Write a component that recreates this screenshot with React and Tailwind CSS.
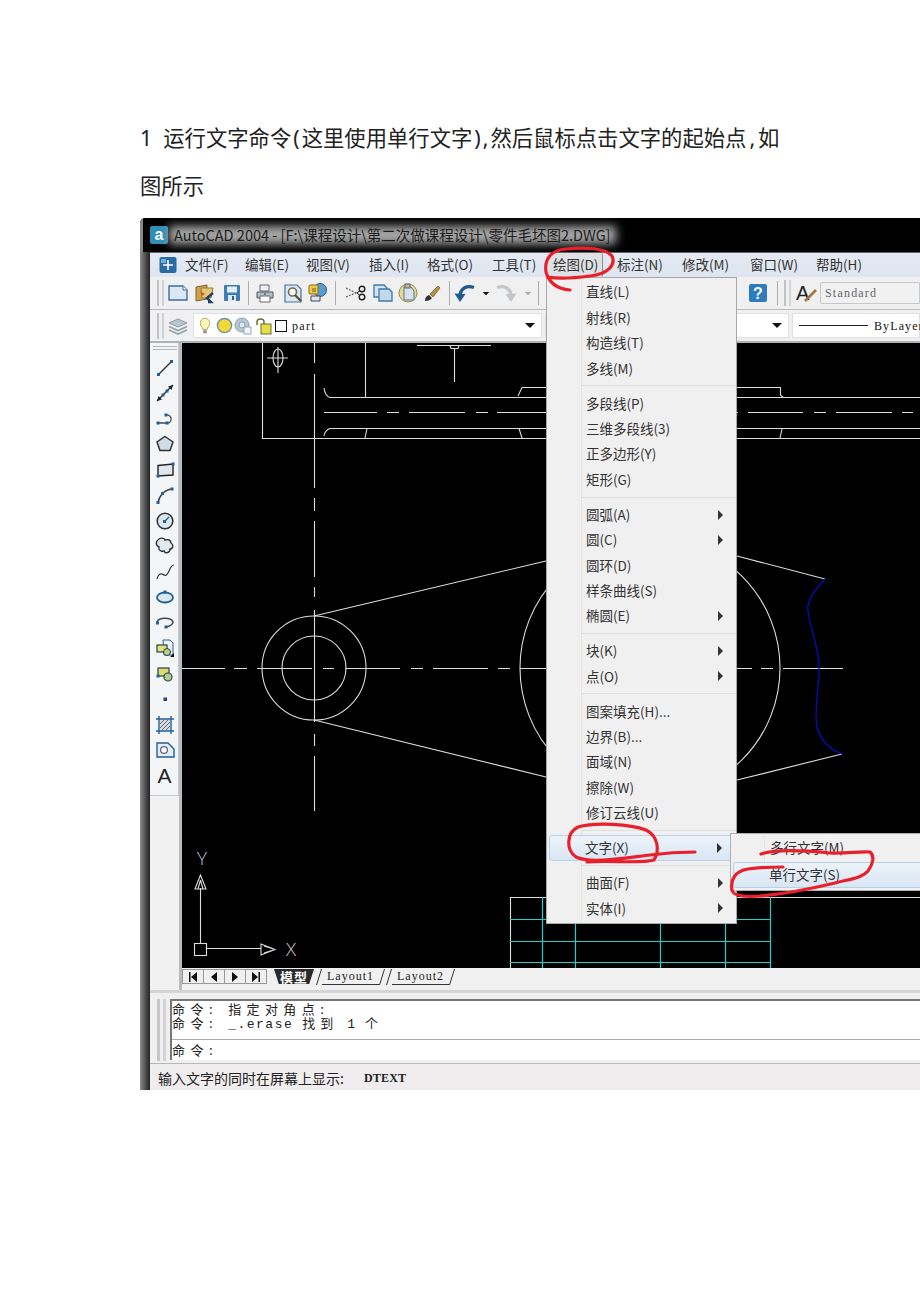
import React from 'react';

const BLUE = '#1f6098';

const Ico = ({ className = '', children }) => (
  <svg viewBox="0 0 22 22" fill="none" className={`h-[22px] w-[22px] shrink-0 ${className}`}>
    {children}
  </svg>
);

const Node = ({ x, y }) => <rect x={x - 1.5} y={y - 1.5} width="3" height="3" fill={BLUE} />;

const Grip = () => (
  <div className="ml-[7px] flex h-[26px] shrink-0 gap-[3px]">
    <div className="w-[2px] bg-[#bcc2c8]" />
    <div className="w-[2px] bg-[#cfd3d8]" />
  </div>
);

const Sep = ({ className = '' }) => <div className={`h-[24px] w-px shrink-0 bg-[#a9aeb3] ${className}`} />;

const Caret = ({ className = '' }) => (
  <div className={`h-0 w-0 shrink-0 border-x-[5px] border-t-[5px] border-x-transparent border-t-[#111] ${className}`} />
);

// left draw toolbar
const DrawTools = [
  <><path d="M5 17L17 5" stroke="#333" strokeWidth="1.4" /><Node x={4.5} y={17.5} /><Node x={17.5} y={4.5} /></>,
  <><path d="M3 19L19 3" stroke="#333" strokeWidth="1.4" /><path d="M19 3l-1.5 5-3.5-3.5zM3 19l1.5-5 3.5 3.5z" fill="#222" /><Node x={9} y={13} /><Node x={13} y={9} /></>,
  <><path d="M4 15H14A4 4 0 1 0 12 7" stroke="#445" strokeWidth="1.3" /><Node x={4} y={15} /><Node x={13} y={15} /><Node x={12} y={7} /></>,
  <path d="M11 3.5L19 9l-3 8.5H6L3 9z" fill="#cfdde6" stroke="#333" strokeWidth="1.5" />,
  <><path d="M4 6.5L19 5v11L4 17z" fill="#dfe6ec" stroke="#222" strokeWidth="1.4" /><Node x={4} y={17} /><Node x={19} y={5} /></>,
  <><path d="M4 19C5 12 10 6 18 5" stroke="#444" strokeWidth="1.5" /><Node x={4} y={18.5} /><Node x={8.5} y={9.5} /><Node x={18} y={5} /></>,
  <><circle cx="11" cy="11" r="7.8" fill="#dfe7ee" stroke="#333" strokeWidth="1.6" /><path d="M11 11l4-4" stroke={BLUE} strokeWidth="1.3" /><Node x={10.5} y={11.5} /></>,
  <path d="M5 4c3-2 6 0 6 1 3-1 6 0 6 3 3 2 2 6-1 6 0 4-5 5-6 2-3 1-6-1-5-4-4-2-3-6 0-8z" fill="#e2e9ef" stroke="#333" strokeWidth="1.4" />,
  <path d="M3 18C4 13 7 12 9 13.5S13 15 15 10s3-6 5-6" stroke="#333" strokeWidth="1.2" />,
  <><ellipse cx="11" cy="11.5" rx="8" ry="5" fill="#dce8f0" stroke={BLUE} strokeWidth="1.8" /><Node x={11} y={6} /></>,
  <><path d="M3 10C5 5 17 5 19 10c0 3-3 4-7 5" stroke="#445" strokeWidth="1.5" /><Node x={3.5} y={11} /><Node x={12} y={15} /></>,
  <><path d="M9 3h7l3 3v12h-9z" fill="#edf2f6" stroke={BLUE} /><rect x="3" y="8" width="10" height="7" fill="#e6e07a" stroke="#245" strokeWidth="1.2" /><circle cx="13" cy="15" r="3.5" fill="#b9cf7a" stroke="#245" /><path d="M20 20v-4l-4 4z" fill="#111" /></>,
  <><rect x="4" y="5" width="11" height="8" fill="#dcdc6e" stroke="#245" strokeWidth="1.2" /><circle cx="14" cy="14" r="4" fill="#b5cc85" stroke="#245" strokeWidth="1.2" /><Node x={4} y={13} /></>,
  <rect x="9.5" y="9.5" width="3.5" height="3.5" fill="#1e4b73" />,
  <><path d="M6 6h10v10H6z" fill="#d5dde4" /><path d="M6 10l4-4M6 14l8-8M8 16l8-8M12 16l4-4" stroke="#667" strokeWidth="1" /><path d="M2 5H20M2 17H20M5 2V20M17 2V20" stroke={BLUE} strokeWidth="1.4" /></>,
  <><path d="M3 4H14L20 10V18H3z" fill="#e3ecf3" stroke={BLUE} strokeWidth="1.4" /><circle cx="10" cy="11" r="3.4" fill="#fff" stroke="#667" strokeWidth="1.3" /></>,
];

const drawMenu = [
  [['直线(L)'], ['射线(R)'], ['构造线(T)'], ['多线(M)']],
  [['多段线(P)'], ['三维多段线(3)'], ['正多边形(Y)'], ['矩形(G)']],
  [['圆弧(A)', 1], ['圆(C)', 1], ['圆环(D)'], ['样条曲线(S)'], ['椭圆(E)', 1]],
  [['块(K)', 1], ['点(O)', 1]],
  [['图案填充(H)...'], ['边界(B)...'], ['面域(N)'], ['擦除(W)'], ['修订云线(U)']],
  [['文字(X)', 1, 1]],
  [['曲面(F)', 1], ['实体(I)', 1]],
];

const menus = [
  ['文件(F)', 'w-[60px]'],
  ['编辑(E)', 'w-[61px]'],
  ['视图(V)', 'w-[63px]'],
  ['插入(I)', 'w-[58px]'],
  ['格式(O)', 'w-[65px]'],
  ['工具(T)', 'w-[61px]'],
  ['绘图(D)', 'w-[64px]'],
  ['标注(N)', 'w-[65px]'],
  ['修改(M)', 'w-[68px]'],
  ['窗口(W)', 'w-[66px]'],
  ['帮助(H)', 'w-[60px]'],
];

const MenuRow = ({ label, arrow, active }) => (
  <div
    className={
      active
        ? 'mx-[2px] flex h-[25.4px] items-center rounded-[3px] border border-[#b9cfe6] bg-gradient-to-b from-[#edf3fa] to-[#d9e6f4]'
        : 'flex h-[25.4px] items-center'
    }
  >
    <div className={active ? 'w-[31px] shrink-0' : 'w-[34px] shrink-0'} />
    <div className={`flex flex-1 items-center justify-between self-stretch pl-[4px] ${active ? '' : 'border-l border-[#e4e4e4]'} ${active ? 'pr-[11px]' : 'pr-[13px]'}`}>
      <span className="leading-none">{label}</span>
      {arrow && <div className="h-0 w-0 border-y-[5px] border-l-[5px] border-y-transparent border-l-[#333]" />}
    </div>
  </div>
);

const Slant = ({ d }) => (
  <svg viewBox="0 0 6 16" className="h-[16px] w-[6px] shrink-0" fill="none">
    <path d={d} stroke="#333" />
  </svg>
);

const LayoutTab = ({ name }) => (
  <div className="flex items-start">
    <Slant d="M5.5 0L0.5 16" />
    <div className="h-[16px] border-b border-[#333] px-[5px] font-['Liberation_Serif',serif] text-[12px] leading-[14px] tracking-[1px] text-[#222]">
      {name}
    </div>
    <Slant d="M5.5 0L0.5 16" />
  </div>
);

const NavBtn = ({ children }) => (
  <div className="flex h-full w-[21px] items-center justify-center border-r border-[#999]">
    <svg viewBox="0 0 10 10" className="h-[10px] w-[10px]" fill="#111">{children}</svg>
  </div>
);

const CadCanvas = () => (
  <svg viewBox="182 343 738 625" className="h-[625px] w-[738px] shrink-0 bg-black" fill="none">
    <g stroke="#dcdcdc" strokeWidth="1.1">
      <path d="M314.5 343V363M314.5 374V488M314.5 498V511M314.5 521V577M314.5 587V597M314.5 610V722M314.5 734V746M314.5 756V811" />
      <path d="M182 668.5H225M234 668.5H247M257 668.5H312M323 668.5H334M345 668.5H400M411 668.5H423M433 668.5H488M498 668.5H510M520 668.5H546M737 668.5H752M761 668.5H773M783 668.5H843" />
      <circle cx="314" cy="668" r="52" />
      <circle cx="314" cy="668" r="32" />
      <circle cx="650" cy="668" r="130" />
      <path d="M314 616L546 561M314 720L546 777M737 556L825 579M737 780L842 754" />
      <path d="M262.5 343V438.5H920M365.5 343V397.5M330 397.5H920M324 388Q325 396 330 397.5M518 396L522 387.5H780.5V395L783 397" />
      <path d="M324 412.5H377M387 412.5H399M409 412.5H465M476 412.5H488M497 412.5H547M737 412.5H738M748 412.5H803M814 412.5H826M836 412.5H892M902 412.5H913" />
      <path d="M324 436Q325 430 330 428.5H920M367 428.5L365 438M519 428.5L522 438M782 429L780 438" />
      <path d="M417 345.5H491M450 345.5L451 348.5H458L459 345.5M454.5 348V382" />
      <ellipse cx="278" cy="358" rx="5" ry="9" />
      <path d="M267 358H288M278 347V373" />
      <path d="M200.5 943V888M206 948.5H261" />
      <rect x="194.5" y="943.5" width="12" height="12" />
      <path d="M200.5 875L195 889H206zM200.5 880L198 889M200.5 880L203 889" />
      <path d="M261 944L275 949.5L261 955zM264 946L275 949.5M264 953L275 949.5" />
      <path d="M510.5 968V897.5H920" />
    </g>
    <path d="M825 579C815 590 806 600 808 612C811 632 820 650 819 673C818 695 814 712 817 727C821 743 832 750 842 754" stroke="#0a0ab8" strokeWidth="1.3" />
    <path d="M510 919.500H770M510 941.500H770M510 962.500H770M542.500 897V968M575.500 897V968M660.500 897V968M725.500 897V968M770.500 897V968" stroke="#1fd0d0" strokeWidth="1.2" />
    <text x="286" y="956" fill="#ececec" className="font-['Noto_Sans',sans-serif] text-[19px] font-extralight">X</text>
    <text x="197" y="865" fill="#ececec" className="font-['Noto_Sans',sans-serif] text-[19px] font-extralight">Y</text>
  </svg>
);

const App = () => {
  return (
    <div className="relative h-[1302px] w-[920px] overflow-hidden bg-white font-['Noto_Sans','Noto_Sans_CJK_SC',sans-serif] text-[#333]">
      <div className="pl-[140px] pt-[114px] text-[21.33px] leading-[48px] text-[#222]">
        <p className="whitespace-pre">
          1  运行文字命令<span className="mx-[2px]">(</span>这里使用单行文字<span className="mx-[2px]">)</span><span className="mr-[2px]">,</span>然后鼠标点击文字的起始点<span className="mx-[3px]">,</span>如
        </p>
        <p>图所示</p>
      </div>

      <div className="relative ml-[140px] mt-[8px] flex h-[872px] w-[780px] flex-col overflow-hidden rounded-tl-[5px] font-['Noto_Sans_CJK_SC',sans-serif] text-[13.5px]">
        {/* title bar */}
        <div className="flex h-[34px] shrink-0 items-center border-l-[3px] border-[#8a8a8a] bg-black pl-[7px]">
          <div className="flex h-[18px] w-[18px] items-center justify-center rounded-[2px] bg-[#2f8fb8] font-['Liberation_Sans',sans-serif] text-[16px] font-bold leading-none text-white">
            a
          </div>
          <div className="relative ml-[6px]">
            <div className="absolute -inset-x-[5px] inset-y-[2px] bg-[#a8a8a8] blur-[5px]" />
            <span className="relative whitespace-nowrap text-[14.5px] text-[#1c1c1c]">
              AutoCAD 2004 - [F:\课程设计\第二次做课程设计\零件毛坯图2.DWG]
            </span>
          </div>
        </div>

        <div className="flex min-h-0 flex-1">
          <div className="w-[10px] shrink-0 bg-gradient-to-r from-[#8d8d8d] to-[#222]" />

          <div className="flex min-w-0 flex-1 flex-col bg-[#f0f0f0]">
            {/* menu bar */}
            <div className="flex h-[25px] shrink-0 items-center border-t border-[#666] bg-gradient-to-b from-[#e4e9f2] to-[#dfe6f1] pl-[9px]">
              <svg viewBox="0 0 18 18" className="h-[18px] w-[18px] shrink-0">
                <rect x="0.5" y="1" width="17" height="16" rx="2" fill="#2a6aa5" />
                <path d="M9 4V14M4 9H14" stroke="#fff" strokeWidth="1.6" />
                <rect x="2" y="3" width="5" height="4" fill="#6cb0de" />
              </svg>
              <div className="ml-[8px] flex items-center">
                {menus.map(([label, w]) => (
                  <div key={label} className={`${w} shrink-0 leading-none`}>
                    {label === '绘图(D)' ? (
                      <span className="-ml-[4px] inline-block rounded-[2px] border-r border-[#8f8f8f] bg-[#dfe1e4] px-[4px] py-[5px]">{label}</span>
                    ) : (
                      label
                    )}
                  </div>
                ))}
              </div>
            </div>

            {/* standard toolbar */}
            <div className="flex h-[33px] shrink-0 items-center border-b border-[#b5bbc2]">
              <Grip />
              <Ico className="ml-[3px]">
                <path d="M2 4H16L20 8V18H2z" fill="#dbe8f2" stroke="#3b6f9f" strokeWidth="1.4" />
                <path d="M16 4V8H20" fill="#fff" stroke="#3b6f9f" />
              </Ico>
              <Ico className="ml-[5px]">
                <path d="M2 5L13 3V17L2 19z" fill="#c9a24a" stroke="#85652a" />
                <path d="M7 6H19L17 16H8z" fill="#e5c77a" stroke="#9c7d3c" />
                <path d="M19 11L13 16L17 20L14 20" stroke="#1c3f66" strokeWidth="2.4" />
                <path d="M6 9l5 3-3 2z" fill="#d9513a" />
              </Ico>
              <Ico className="ml-[5px]">
                <rect x="3" y="3" width="16" height="16" rx="1" fill="#3d7cb4" />
                <rect x="6" y="4.500" width="10" height="6" fill="#e3edf5" />
                <rect x="7" y="13" width="8" height="6" fill="#dbe6ef" />
                <rect x="11" y="14" width="2" height="4" fill="#2b5f8f" />
              </Ico>
              <Sep className="ml-[5px]" />
              <Ico className="ml-[5px]">
                <path d="M6 3H15V9H6z" fill="#eef1f4" stroke="#667" />
                <path d="M3 10H19V16H3z" fill="#b4bcc6" stroke="#556" />
                <path d="M6 14H16V20H6z" fill="#fff" stroke="#667" />
                <circle cx="11" cy="12" r="1" fill="#667" />
              </Ico>
              <Ico className="ml-[6px]">
                <path d="M3 3H15L19 7V20H3z" fill="#dbe8f2" stroke="#3e74a3" strokeWidth="1.2" />
                <circle cx="10.500" cy="10" r="4" fill="#f4f7fa" stroke="#7a6a4c" strokeWidth="1.6" />
                <path d="M13 13L19 19" stroke="#5a4a30" strokeWidth="2.2" />
              </Ico>
              <Ico className="ml-[2px]">
                <circle cx="14" cy="8" r="6.500" fill="#5c9bd1" stroke="#2c5b85" />
                <rect x="3" y="3" width="9" height="9" rx="1" fill="#eeca45" stroke="#8a6f1d" />
                <path d="M5 14H14V19H5z" fill="#dfe5ea" stroke="#445" />
                <path d="M6 7H10M6 9H10" stroke="#7a611b" />
              </Ico>
              <Sep className="ml-[7px]" />
              <Ico className="ml-[10px]">
                <path d="M0 6L11 11.500M0 15L11 10.500" stroke="#666" strokeDasharray="2 1.200" strokeWidth="1.200" />
                <circle cx="16" cy="7" r="2.800" stroke="#222" strokeWidth="1.400" />
                <circle cx="16" cy="15" r="2.800" stroke="#222" strokeWidth="1.400" />
                <path d="M11 11L14 8.500M11 11L14 13.500" stroke="#222" />
              </Ico>
              <Ico className="ml-[4px]">
                <path d="M2 3H12L15 6V15H2z" fill="#d6e4f0" stroke="#3c79ad" strokeWidth="1.300" />
                <path d="M7 7H17L20 10V19H7z" fill="#c3d9ea" stroke="#3c79ad" strokeWidth="1.300" />
              </Ico>
              <Ico className="ml-[3px]">
                <circle cx="11" cy="11" r="9" fill="#e6d79a" stroke="#a38c3f" />
                <path d="M7 5H14L17 9V18H7z" fill="#d6e3ec" stroke="#4b7797" />
                <rect x="8" y="2" width="5" height="4" fill="#b1b7a0" stroke="#666" />
              </Ico>
              <Ico className="ml-[2px]">
                <path d="M4 19C4 16 5 14 8 13L11 16C10 18 7 19 4 19z" fill="#333" />
                <path d="M9 12L17 4L19 6L12 15z" fill="#b78d4b" stroke="#6b5229" strokeWidth="0.700" />
              </Ico>
              <Sep className="ml-[6px]" />
              <Ico className="ml-[4px]">
                <path d="M20 5.500C13 3 7 6 6 13" stroke="#1f5a94" strokeWidth="3.400" />
                <path d="M0.500 11.500L11.500 12L6 20z" fill="#1f5a94" />
              </Ico>
              <Caret className="ml-[5px] scale-[0.65] border-t-[#1b2d88]" />
              <Ico className="ml-[4px]">
                <path d="M2 5.500C9 3 15 6 16 13" stroke="#c3c6c9" strokeWidth="3.400" />
                <path d="M21.500 11.500L10.500 12L16 20z" fill="#c3c6c9" />
              </Ico>
              <Caret className="ml-[6px] scale-[0.65] border-t-[#aaa]" />
              <Sep className="ml-[5px]" />
              <Ico className="ml-[208px]">
                <rect x="2" y="2" width="18" height="18" rx="2" fill="#2d7cbd" />
                <text x="11" y="17" textAnchor="middle" fill="#fff" className="font-['Liberation_Sans',sans-serif] text-[16px] font-bold">?</text>
              </Ico>
              <Sep className="ml-[8px]" />
              <div className="ml-[6px] flex h-[26px] shrink-0 gap-[3px]">
                <div className="w-[2px] bg-[#bcc2c8]" />
                <div className="w-[2px] bg-[#cfd3d8]" />
              </div>
              <Ico className="ml-[4px]">
                <text x="1" y="18" fill="#222" className="font-['Liberation_Sans',sans-serif] text-[20px]">A</text>
                <path d="M10 19L21 8" stroke="#a5753a" strokeWidth="2.600" />
              </Ico>
              <div className="ml-[3px] flex h-[22px] min-w-0 flex-1 items-center rounded-l-[2px] border border-[#c5c9cd] bg-[#f1f1f1] pl-[4px] font-['Liberation_Serif',serif] text-[12px] tracking-[1.2px] text-[#666]">
                Standard
              </div>
            </div>

            {/* layers toolbar */}
            <div className="flex h-[33px] shrink-0 items-center border-b-2 border-[#aeb3b8]">
              <Grip />
              <Ico className="ml-[3px]">
                <path d="M2 8L11 4L20 8L11 12z" fill="#b7c6d0" stroke="#8a9aa6" />
                <path d="M2 11.500L11 15.500L20 11.500M2 15L11 19L20 15" stroke="#93a3ae" strokeWidth="1.600" />
              </Ico>
              <div className="ml-[4px] flex h-[25px] w-[349px] shrink-0 items-center border border-[#e0e0e0] bg-white pl-[5px]">
                <svg viewBox="0 0 14 20" className="h-[20px] w-[12px] shrink-0">
                  <path d="M7 1C3 1 1.500 4 1.500 7C1.500 10 4 11 4.500 14H9.500C10 11 12.500 10 12.500 7C12.500 4 11 1 7 1z" fill="#fbf6b8" stroke="#a39b4f" />
                  <rect x="5" y="15" width="4" height="3.500" fill="#8c8c8c" />
                </svg>
                <svg viewBox="0 0 18 18" className="ml-[5px] h-[17px] w-[17px] shrink-0">
                  <circle cx="9" cy="9" r="7.500" fill="#f3d83a" stroke="#6a93a8" strokeWidth="1.500" />
                </svg>
                <svg viewBox="0 0 18 18" className="ml-[1px] h-[18px] w-[18px] shrink-0">
                  <circle cx="8" cy="8" r="7" fill="#b6c6d2" stroke="#8ea2b1" />
                  <circle cx="8" cy="8" r="3" fill="#e4ebf0" stroke="#8ea2b1" />
                  <rect x="10" y="10" width="7" height="7" fill="#f2f5f7" stroke="#97a6b3" />
                </svg>
                <svg viewBox="0 0 18 18" className="ml-[3px] h-[18px] w-[18px] shrink-0">
                  <path d="M2 8V5C2 1 9 1 9 5V7" fill="none" stroke="#6d6d28" strokeWidth="1.500" />
                  <rect x="6" y="7" width="10" height="10" fill="#e6de46" stroke="#6d6d28" />
                </svg>
                <div className="ml-[2px] h-[12px] w-[12px] shrink-0 border border-[#111] bg-white" />
                <span className="ml-[5px] font-['Liberation_Serif',serif] text-[12px] tracking-[1.3px] text-[#111]">part</span>
                <Caret className="ml-auto mr-[6px]" />
              </div>
              <div className="ml-[3px] flex h-[25px] w-[244px] shrink-0 items-center border border-[#e0e0e0] bg-white">
                <Caret className="ml-auto mr-[6px]" />
              </div>
              <div className="ml-[3px] flex h-[25px] min-w-0 flex-1 items-center border border-[#e0e0e0] bg-white pl-[6px] font-['Liberation_Serif',serif] text-[12px] tracking-[1.1px] text-[#111]">
                <div className="h-px w-[69px] shrink-0 bg-[#222]" />
                <span className="ml-[6px]">ByLayer</span>
              </div>
            </div>

            {/* workspace */}
            <div className="flex shrink-0">
              <div className="w-[32px] shrink-0 border-r-[3px] border-[#b9bcbf] bg-[#f1f1f1]">
                <div className="flex flex-col items-center border-b border-r border-[#c9c9c9] bg-[#f4f5f6] pb-[6px] pl-[1px]">
                  <div className="mb-[5px] mt-[3px] h-[4px] w-[24px] border-y border-[#b5b5b5]" />
                  {DrawTools.map((tool, i) => (
                    <div key={i} className="flex h-[25.5px] items-center">
                      <Ico>{tool}</Ico>
                    </div>
                  ))}
                  <div className="flex h-[25.5px] items-center font-['Liberation_Sans',sans-serif] text-[21px] leading-none text-[#222]">A</div>
                </div>
              </div>

              <div className="flex w-[738px] shrink-0 flex-col">
                <CadCanvas />
                {/* layout tabs */}
                <div className="flex h-[22px] items-start bg-[#f0f0f0] pt-px">
                  <div className="flex h-[15px] items-center border border-[#999]">
                    <NavBtn><path d="M1 0h1.500v10H1zM9 0v10L3 5z" /></NavBtn>
                    <NavBtn><path d="M8 0v10L2 5z" /></NavBtn>
                    <NavBtn><path d="M2 0v10l6-5z" /></NavBtn>
                    <div className="flex h-full w-[20px] items-center justify-center">
                      <svg viewBox="0 0 10 10" className="h-[10px] w-[10px]" fill="#111"><path d="M7.500 0H9v10H7.500zM1 0v10l6-5z" /></svg>
                    </div>
                  </div>
                  <div className="ml-[7px] flex h-[15px] w-[40px] items-center justify-center bg-[#2a2a2a] text-[13px] font-bold leading-none tracking-[1px] text-white [clip-path:polygon(0_0,100%_0,88%_100%,12%_100%)]">
                    模型
                  </div>
                  <div className="ml-[2px]"><LayoutTab name="Layout1" /></div>
                  <div className="ml-[1px]"><LayoutTab name="Layout2" /></div>
                </div>
              </div>
            </div>

            {/* command window */}
            <div className="flex h-[73px] shrink-0 items-stretch border-t-[3px] border-[#d4d4d4] pb-[3px] pl-[7px] pt-[6px]">
              <div className="flex h-[62px] shrink-0 gap-[3px]">
                <div className="w-[3px] bg-[#c4c7ca]" />
                <div className="w-[3px] bg-[#d2d5d8]" />
              </div>
              <div className="ml-[4px] flex min-w-0 flex-1 flex-col border-l-2 border-t-2 border-[#777] bg-white text-[13px] leading-[14px] text-[#222]">
                <div className="h-[39px] whitespace-pre border-b border-[#aaa] pt-px">
                  <div>
                    <span className="tracking-[5.5px]">命令</span>
                    <span className="tracking-[5.5px]">:</span>
                    <span className="ml-[10px] tracking-[5.4px]">指定对角点</span>
                    <span>:</span>
                  </div>
                  <div>
                    <span className="tracking-[5.5px]">命令</span>
                    <span className="tracking-[5.5px]">:</span>
                    <span className="ml-[10px] font-['Liberation_Mono',monospace] tracking-[1.5px]">_.erase</span>
                    <span className="ml-[9px] tracking-[5px]">找到</span>
                    <span className="ml-[9px] font-['Liberation_Mono',monospace]">1</span>
                    <span className="ml-[10px]">个</span>
                  </div>
                </div>
                <div className="whitespace-pre pt-[3px]">
                  <span className="tracking-[5.5px]">命令</span>:
                </div>
              </div>
            </div>

            {/* status bar */}
            <div className="flex h-[27px] shrink-0 items-center border-t border-[#b8b8b8] bg-[#efeded] pl-[8px] pt-[2px] text-[14px] text-[#222]">
              <span>输入文字的同时在屏幕上显示:</span>
              <span className="ml-[20px] font-['Liberation_Serif',serif] text-[12px] font-bold tracking-[0.2px]">DTEXT</span>
            </div>
          </div>
        </div>

        {/* draw menu */}
        <div className="absolute left-[406px] top-[59px] w-[191px] border border-[#a9a9a9] bg-[#f0f0f0] pb-[2px] pt-[1.5px] text-[#333]">
          {drawMenu.map((group, g) => (
            <div key={g}>
              {g > 0 && (
                <div className="ml-[34px] flex h-[9.6px] items-center border-l border-[#e4e4e4]">
                  <div className="h-px w-full bg-[#dfdfdf]" />
                </div>
              )}
              {group.map(([label, arrow, active]) => (
                <MenuRow key={label} label={label} arrow={arrow} active={active} />
              ))}
            </div>
          ))}
        </div>

        {/* text submenu */}
        <div className="absolute left-[590px] top-[615px] w-[200px] border border-[#b0b0b0] bg-[#f0f0f0] text-[#333]">
          <div className="flex h-[28px] items-center">
            <div className="h-full w-[34px] shrink-0 border-r border-[#e4e4e4]" />
            <span className="ml-[5px] leading-none">多行文字(M)</span>
          </div>
          <div className="mx-[2px] mb-[2px] flex h-[26px] items-center rounded-[3px] border border-[#b9cfe6] bg-gradient-to-b from-[#edf3fa] to-[#d9e6f4] pl-[35px]">
            <span className="leading-none">单行文字(S)</span>
          </div>
        </div>

        {/* red pen marks */}
        <svg viewBox="140 218 780 872" className="pointer-events-none absolute inset-0 h-[872px] w-[780px]" fill="none" stroke="#e8202c" strokeWidth="3.2" strokeLinecap="round">
          <path d="M570 290C558 289 549 283 546 272C544 258 552 250 566 249C585 247 606 248 612 256C616 265 608 274 590 276C575 278 558 279 548 277" />
          <path d="M587 862C610 860 640 864 654 860C660 850 658 836 646 830C630 824 595 822 578 827C566 833 566 850 576 857C590 864 625 858 650 855C665 853 680 852 695 852" />
          <path d="M761 854C775 849 800 850 830 853C845 854 860 851 870 852C875 856 873 864 868 871C862 878 850 879 835 883C810 889 785 894 760 896C745 897 733 896 732 890C730 880 735 871 748 869C760 867 772 867 783 867" />
        </svg>
      </div>
    </div>
  );
};

export default App;
